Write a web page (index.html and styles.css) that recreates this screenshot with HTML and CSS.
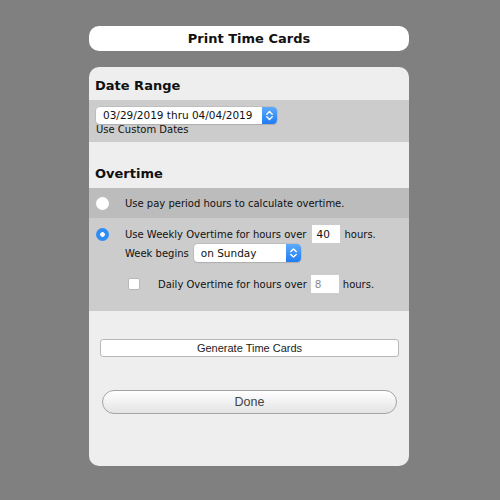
FILE: index.html
```html
<!DOCTYPE html>
<html lang="en">
<head>
  <meta charset="UTF-8" />
  <title>Print Time Cards</title>
  <link rel="stylesheet" href="styles.css">
</head>
<body>
<div class="sheet">
  <div class="title">Print Time Cards</div>

  <div class="panel">
    <h2 class="first">Date Range</h2>
    <div class="band">
      <div class="select range">
        <span class="value">03/29/2019 thru 04/04/2019</span>
        <span class="arrows">
          <svg width="15" height="17" viewBox="0 0 15 17"><path d="M4.8 7.2 L7.5 4.6 L10.2 7.2 M4.8 9.8 L7.5 12.4 L10.2 9.8" fill="none" stroke="#fff" stroke-width="1.4" stroke-linecap="round" stroke-linejoin="round"/></svg>
        </span>
      </div>
      <div class="hint">Use Custom Dates</div>
    </div>

    <h2>Overtime</h2>
    <div class="band dark">
      <div class="row">
        <span class="radio"></span>
        <span>Use pay period hours to calculate overtime.</span>
      </div>
    </div>
    <div class="band weekly">
      <div class="row">
        <span class="radio on"></span>
        <span>Use Weekly Overtime for hours over</span>
        <span class="num wide">40</span>
        <span>hours.</span>
      </div>
      <div class="row sub">
        <span>Week begins</span>
        <div class="select day">
          <span class="value">on Sunday</span>
          <span class="arrows">
            <svg width="15" height="18" viewBox="0 0 15 18"><path d="M4.8 7.6 L7.5 5 L10.2 7.6 M4.8 10.4 L7.5 13 L10.2 10.4" fill="none" stroke="#fff" stroke-width="1.4" stroke-linecap="round" stroke-linejoin="round"/></svg>
          </span>
        </div>
      </div>
      <div class="row daily">
        <span class="check"></span>
        <span>Daily Overtime for hours over</span>
        <span class="num faint">8</span>
        <span>hours.</span>
      </div>
    </div>

    <button class="generate">Generate Time Cards</button>
    <button class="done">Done</button>
  </div>
</div>
</body>
</html>
```

FILE: styles.css
```css
body {
  margin: 0;
  background: #808080;
  font-family: "DejaVu Sans", Verdana, sans-serif;
  color: #111;
}

.sheet {
  width: 320px;
  margin-left: 89px;
  padding-top: 26px;
}

.title {
  height: 25px;
  line-height: 25px;
  background: #fff;
  border-radius: 10px;
  text-align: center;
  font-weight: bold;
  font-size: 13px;
}

.panel {
  margin-top: 16px;
  height: 399px;
  background: #eeeeee;
  border-radius: 10px;
  overflow: hidden;
  display: flex;
  flex-direction: column;
}

h2 {
  margin: 0;
  padding: 24px 6px 7px;
  font-size: 13px;
  line-height: 15px;
}

h2.first {
  padding-top: 11px;
}

.band {
  background: #cccccc;
  padding: 7px 7px 6px;
  font-size: 10px;
}

.band.dark {
  background: #bcbcbc;
  height: 30px;
  padding: 0 7px;
  display: flex;
  align-items: center;
}

.band.weekly {
  padding: 7px 7px 18px;
}

.row {
  display: flex;
  align-items: center;
  gap: 4px;
}

.select {
  display: flex;
  height: 17px;
  background: #fff;
  border-radius: 4px;
  box-shadow: 0 0 0 0.5px #b0b0b0, 0 1px 1px rgba(0, 0, 0, 0.15);
  font-size: 10.5px;
  overflow: hidden;
}

.select .value {
  flex: 1;
  padding-left: 7px;
  line-height: 17px;
}

.select .arrows {
  width: 15px;
  background: linear-gradient(#5eaafb, #1f7cf1);
  display: flex;
}

.range {
  width: 181px;
}

.hint {
  line-height: 12px;
}

.radio {
  width: 13px;
  height: 13px;
  border-radius: 50%;
  background: #fff;
  margin-right: 12px;
  flex: none;
}

.radio.on {
  background: radial-gradient(circle, #fff 0 2px, #2e8cf5 2.6px);
}

.num {
  width: 28px;
  height: 18px;
  line-height: 18px;
  background: #fff;
  padding-left: 4px;
  box-sizing: border-box;
  font-size: 10.5px;
}

.num.wide {
  margin-left: 2px;
}

.num.faint {
  color: #8c8c8c;
}

.row.sub {
  margin: 1px 0 0 29px;
  gap: 5px;
}

.day {
  width: 107px;
  height: 18px;
}

.day .value {
  line-height: 18px;
}

.row.daily {
  margin: 13px 0 0 32px;
}

.check {
  width: 10px;
  height: 10px;
  background: #fff;
  border: 0.5px solid #b8b8b8;
  border-radius: 2px;
  margin-right: 14px;
  flex: none;
}

button {
  font-family: "Liberation Sans", Arial, sans-serif;
  color: #222;
  cursor: pointer;
}

.generate {
  margin: 28px 10px 0 11px;
  height: 18px;
  padding: 0;
  background: #fff;
  border: 1px solid #b8b8b8;
  border-radius: 3px;
  font-size: 11px;
}

.done {
  margin: 33px 12px 0 13px;
  height: 24px;
  padding: 0;
  background: linear-gradient(#ffffff, #e3e3e3);
  border: 1px solid #a4a4a4;
  border-radius: 12px;
  font-size: 12.5px;
  color: #444;
}
```
